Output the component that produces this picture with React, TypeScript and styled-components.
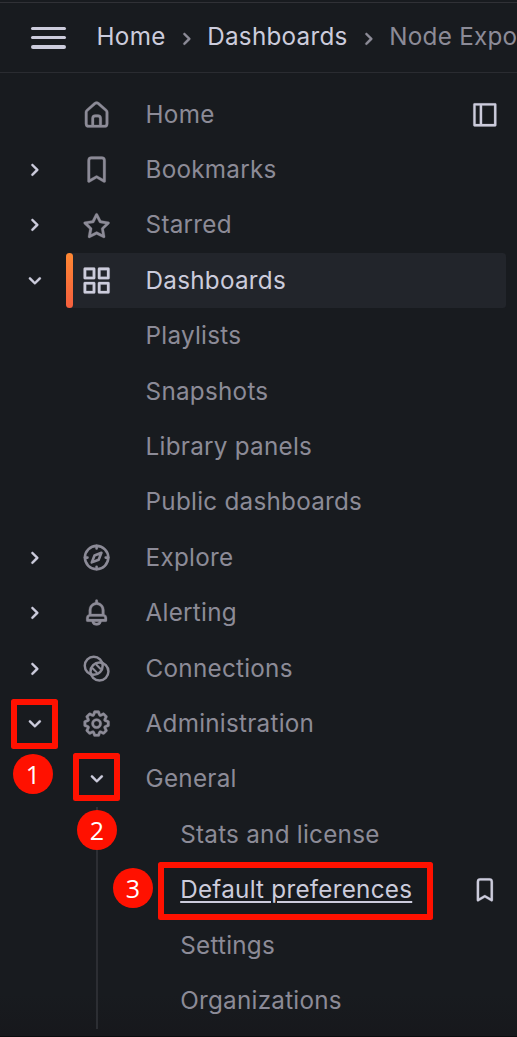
import React from 'react';
import styled, { createGlobalStyle, css } from 'styled-components';

const GlobalStyle = createGlobalStyle`
  * { box-sizing: border-box; }
  body {
    margin: 0;
    background: #181b1f;
    overflow: hidden;
  }
`;

const colors = {
  text: '#ccccdc',
  muted: '#8c8b97',
  line: '#2a2c31',
  mark: '#ff1100',
};

const Page = styled.div`
  position: relative;
  width: 517px;
  height: 1037px;
  overflow: hidden;
  display: flex;
  flex-direction: column;
  background: linear-gradient(#181b1f 96%, #17181c 100%);
  border-bottom: 1px solid #0b0c0e;
  font-family: Inter, 'Liberation Sans', sans-serif;
  font-size: 24.26px;
  letter-spacing: 0.25px;
  color: ${colors.muted};
`;

const TopBar = styled.header`
  flex: none;
  margin-top: 2px;
  height: 71px;
  border-top: 1px solid #303136;
  border-bottom: 1px solid ${colors.line};
  display: flex;
  align-items: center;
  padding: 0 0 3px 31px;
  white-space: nowrap;
`;

const MenuButton = styled.button`
  flex: none;
  width: 35px;
  height: 22px;
  margin: 3px 30.6px 0 0;
  padding: 0;
  border: 0;
  background: none;
  display: flex;
  flex-direction: column;
  justify-content: space-between;
`;

const MenuBar = styled.span`
  height: 3.6px;
  border-radius: 2px;
  background: ${colors.text};
`;

const Crumb = styled.span<{ $current?: boolean }>`
  color: ${(p) => (p.$current ? colors.muted : colors.text)};
`;

const CrumbSeparator = styled.span`
  flex: none;
  width: 41.7px;
  height: 28px;
  display: flex;
  align-items: center;
  justify-content: center;
  padding-top: 6px;
`;

const Nav = styled.nav`
  padding-top: 13.7px;
  display: flex;
  flex-direction: column;
`;

const Row = styled.div`
  height: 55.42px;
  display: flex;
  align-items: center;
  padding-right: 11px;
`;

const Toggle = styled.div`
  flex: none;
  width: 66px;
  display: flex;
  justify-content: center;
  padding: 0 0 0 3px;
  color: ${colors.text};
`;

const Item = styled.div<{ $active?: boolean }>`
  flex: 1;
  height: 100%;
  display: flex;
  align-items: center;
  border-radius: 3.5px;
  ${(p) =>
    p.$active &&
    css`
      background: #22252b;
      color: ${colors.text};
    `}
`;

const ActiveBar = styled.span`
  width: 7px;
  height: 100%;
  margin: 0 -6.5px 0 -0.5px;
  border-radius: 3.5px;
  background: linear-gradient(#ff8833, #f55f3e);
`;

const IconSlot = styled.span<{ $strong?: boolean }>`
  flex: none;
  width: 79.6px;
  padding-left: 15.4px;
  display: flex;
  ${(p) => p.$strong && css`
    padding-left: 17.1px;
    color: ${colors.text};
  `}
`;

const Label = styled.span<{ $indent?: boolean; $link?: boolean }>`
  flex: 1;
  line-height: 36px;
  padding: 0 0 1.6px ${(p) => (p.$indent ? '34.6px' : '0')};
  white-space: nowrap;
`;

const LinkText = styled.a`
  color: ${colors.text};
  text-decoration: underline;
  text-decoration-thickness: 2px;
  text-underline-offset: 3px;
`;

const Action = styled.span`
  width: 43px;
  display: flex;
  justify-content: center;
  color: ${colors.text};
`;

const SubTree = styled.div`
  position: relative;
  &::before {
    content: '';
    position: absolute;
    left: 96px;
    top: 0;
    bottom: 0;
    width: 2px;
    background: #2c2e33;
  }
`;

const Outline = styled.div<{ $x: number; $y: number; $w: number; $h: number }>`
  position: absolute;
  left: ${(p) => p.$x}px;
  top: ${(p) => p.$y}px;
  width: ${(p) => p.$w}px;
  height: ${(p) => p.$h}px;
  border: 6px solid ${colors.mark};
  border-radius: 2.5px;
`;

const Badge = styled.div<{ $x: number; $y: number }>`
  position: absolute;
  left: ${(p) => p.$x}px;
  top: ${(p) => p.$y}px;
  width: 40px;
  height: 40px;
  border-radius: 50%;
  background: ${colors.mark};
  color: #fff;
  font: 25px/41px 'Open Sans', sans-serif;
  letter-spacing: 0;
  text-align: center;
`;

const icons = {
  right: (
    <path d="M14.83,11.29,10.59,7.05a1,1,0,0,0-1.42,0,1,1,0,0,0,0,1.41L12.71,12,9.17,15.54a1,1,0,0,0,0,1.41,1,1,0,0,0,.71.29,1,1,0,0,0,.71-.29l4.24-4.24A1,1,0,0,0,14.83,11.29Z" />
  ),
  down: (
    <path d="M17,9.17a1,1,0,0,0-1.41,0L12,12.71,8.46,9.17a1,1,0,0,0-1.41,0,1,1,0,0,0,0,1.42l4.24,4.24a1,1,0,0,0,1.42,0L17,10.59A1,1,0,0,0,17,9.17Z" />
  ),
  home: (
    <path d="M20,8h0L14,2.74a3,3,0,0,0-4,0L4,8a3,3,0,0,0-1,2.26V19a3,3,0,0,0,3,3H18a3,3,0,0,0,3-3V10.25A3,3,0,0,0,20,8ZM14,20H10V15a1,1,0,0,1,1-1h2a1,1,0,0,1,1,1Zm5-1a1,1,0,0,1-1,1H16V15a3,3,0,0,0-3-3H11a3,3,0,0,0-3,3v5H6a1,1,0,0,1-1-1V10.25a1,1,0,0,1,.34-.75l6-5.25a1,1,0,0,1,1.32,0l6,5.25a1,1,0,0,1,.34.75Z" />
  ),
  bookmark: (
    <path d="M16,2H8A3,3,0,0,0,5,5V21a1,1,0,0,0,.5.87,1,1,0,0,0,1,0L12,18.69l5.5,3.18A1,1,0,0,0,18,22a1,1,0,0,0,.5-.13A1,1,0,0,0,19,21V5A3,3,0,0,0,16,2Zm1,17.27-4.5-2.6a1,1,0,0,0-1,0L7,19.27V5A1,1,0,0,1,8,4h8a1,1,0,0,1,1,1Z" />
  ),
  star: (
    <path d="M22,9.67A1,1,0,0,0,21.14,9l-5.69-.83L12.9,3a1,1,0,0,0-1.8,0L8.55,8.16,2.86,9a1,1,0,0,0-.81.68,1,1,0,0,0,.25,1l4.13,4-1,5.68A1,1,0,0,0,6.9,21.44L12,18.77l5.1,2.67a.93.93,0,0,0,.46.12,1,1,0,0,0,.59-.19,1,1,0,0,0,.4-1l-1-5.68,4.13-4A1,1,0,0,0,22,9.67Zm-6.15,4a1,1,0,0,0-.29.88l.72,4.2-3.76-2a1.06,1.06,0,0,0-.94,0l-3.76,2,.72-4.2a1,1,0,0,0-.29-.88l-3-3,4.21-.61a1,1,0,0,0,.76-.55L12,5.7l1.88,3.82a1,1,0,0,0,.76.55l4.21.61Z" />
  ),
  apps: (
    <path d="M10,13H3a1,1,0,0,0-1,1v7a1,1,0,0,0,1,1h7a1,1,0,0,0,1-1V14A1,1,0,0,0,10,13ZM9,20H4V15H9ZM21,2H14a1,1,0,0,0-1,1v7a1,1,0,0,0,1,1h7a1,1,0,0,0,1-1V3A1,1,0,0,0,21,2ZM20,9H15V4h5Zm1,4H14a1,1,0,0,0-1,1v7a1,1,0,0,0,1,1h7a1,1,0,0,0,1-1V14A1,1,0,0,0,21,13Zm-1,7H15V15h5ZM10,2H3A1,1,0,0,0,2,3v7a1,1,0,0,0,1,1h7a1,1,0,0,0,1-1V3A1,1,0,0,0,10,2ZM9,9H4V4H9Z" />
  ),
  compass: (
    <g fill="none" stroke="currentColor" strokeWidth="2" strokeLinecap="round" strokeLinejoin="round">
      <circle cx="12" cy="12" r="9" />
      <path d="M12 3v2M12 19v2M3 12h2M19 12h2" />
      <path d="M15.7 8.3l-2.1 5.3-5.3 2.1 2.1-5.3z" />
    </g>
  ),
  bell: (
    <path d="M18,13.18V10a6,6,0,0,0-5-5.91V3a1,1,0,0,0-2,0V4.09A6,6,0,0,0,6,10v3.18A3,3,0,0,0,4,16v2a1,1,0,0,0,1,1H8.14a4,4,0,0,0,7.72,0H19a1,1,0,0,0,1-1V16A3,3,0,0,0,18,13.18ZM8,10a4,4,0,0,1,8,0v3H8Zm4,10a2,2,0,0,1-1.72-1h3.44A2,2,0,0,1,12,20Zm6-3H6V16a1,1,0,0,1,1-1H17a1,1,0,0,1,1,1Z" />
  ),
  connections: (
    <g fill="none" stroke="currentColor" strokeWidth="1.9" strokeLinecap="round">
      <circle cx="9.8" cy="9.8" r="6.9" />
      <circle cx="14.2" cy="14.2" r="6.9" />
      <path strokeWidth="1.6" d="M11.9 9.1l3 3M9.1 11.9l3 3" />
    </g>
  ),
  cog: (
    <path d="M21.32,9.55l-1.89-.63.89-1.78A1,1,0,0,0,20.13,6L18,3.87a1,1,0,0,0-1.15-.19l-1.78.89-.63-1.89A1,1,0,0,0,13.5,2h-3a1,1,0,0,0-.95.68L8.92,4.57,7.14,3.68A1,1,0,0,0,6,3.87L3.87,6a1,1,0,0,0-.19,1.15l.89,1.78-1.89.63A1,1,0,0,0,2,10.5v3a1,1,0,0,0,.68.95l1.89.63-.89,1.78A1,1,0,0,0,3.87,18L6,20.13a1,1,0,0,0,1.15.19l1.78-.89.63,1.89a1,1,0,0,0,.95.68h3a1,1,0,0,0,.95-.68l.63-1.89,1.78.89A1,1,0,0,0,18,20.13L20.13,18a1,1,0,0,0,.19-1.15l-.89-1.78,1.89-.63A1,1,0,0,0,22,13.5v-3A1,1,0,0,0,21.32,9.55ZM20,12.78l-1.2.4A2,2,0,0,0,17.64,16l.57,1.14-1.1,1.1L16,17.64a2,2,0,0,0-2.79,1.16l-.4,1.2H11.22l-.4-1.2A2,2,0,0,0,8,17.64l-1.14.57-1.1-1.1L6.36,16A2,2,0,0,0,5.2,13.18L4,12.78V11.22l1.2-.4A2,2,0,0,0,6.36,8L5.79,6.89l1.1-1.1L8,6.36A2,2,0,0,0,10.82,5.2l.4-1.2h1.56l.4,1.2A2,2,0,0,0,16,6.36l1.14-.57,1.1,1.1L17.64,8a2,2,0,0,0,1.16,2.79l1.2.4ZM12,8a4,4,0,1,0,4,4A4,4,0,0,0,12,8Zm0,6a2,2,0,1,1,2-2A2,2,0,0,1,12,14Z" />
  ),
  dock: (
    <path
      fillRule="evenodd"
      d="M3 2H21a1 1 0 0 1 1 1V21a1 1 0 0 1-1 1H3a1 1 0 0 1-1-1V3a1 1 0 0 1 1-1ZM4 4V20H7.6V4ZM9.6 4V20H20V4Z"
    />
  ),
};

type IconName = keyof typeof icons;

const Glyph = styled.svg<{ $size: number }>`
  flex: none;
  width: ${(p) => p.$size}px;
  height: ${(p) => p.$size}px;
  fill: currentColor;
  stroke: currentColor;
  stroke-width: 0.2;
`;

const Icon = ({ name, size }: { name: IconName; size: number }) => (
  <Glyph $size={size} viewBox="0 0 24 24" aria-hidden="true">
    {icons[name]}
  </Glyph>
);

interface NavRowProps {
  label: string;
  toggle?: 'right' | 'down';
  icon?: IconName;
  branch?: boolean;
  active?: boolean;
  indent?: boolean;
  link?: boolean;
  action?: IconName;
}

const NavRow = ({ label, toggle, icon, branch, active, indent, link, action }: NavRowProps) => (
  <Row>
    <Toggle>{toggle && <Icon name={toggle} size={27.7} />}</Toggle>
    <Item $active={active}>
      {active && <ActiveBar />}
      <IconSlot $strong={branch}>
        {icon && <Icon name={icon} size={31.2} />}
        {branch && <Icon name="down" size={27.7} />}
      </IconSlot>
      <Label $indent={indent}>{link ? <LinkText>{label}</LinkText> : label}</Label>
      {action && (
        <Action>
          <Icon name={action} size={27.7} />
        </Action>
      )}
    </Item>
  </Row>
);

export default function App() {
  return (
    <>
      <GlobalStyle />
      <Page>
        <TopBar>
          <MenuButton aria-label="Toggle menu">
            <MenuBar />
            <MenuBar />
            <MenuBar />
          </MenuButton>
          <Crumb>Home</Crumb>
          <CrumbSeparator><Icon name="right" size={27.7} /></CrumbSeparator>
          <Crumb>Dashboards</Crumb>
          <CrumbSeparator><Icon name="right" size={27.7} /></CrumbSeparator>
          <Crumb $current>Node Expo</Crumb>
        </TopBar>
        <Nav>
          <NavRow label="Home" icon="home" action="dock" />
          <NavRow label="Bookmarks" toggle="right" icon="bookmark" />
          <NavRow label="Starred" toggle="right" icon="star" />
          <NavRow label="Dashboards" toggle="down" icon="apps" active />
          <NavRow label="Playlists" />
          <NavRow label="Snapshots" />
          <NavRow label="Library panels" />
          <NavRow label="Public dashboards" />
          <NavRow label="Explore" toggle="right" icon="compass" />
          <NavRow label="Alerting" toggle="right" icon="bell" />
          <NavRow label="Connections" toggle="right" icon="connections" />
          <NavRow label="Administration" toggle="down" icon="cog" />
          <NavRow label="General" branch />
          <SubTree>
            <NavRow label="Stats and license" indent />
            <NavRow label="Default preferences" indent link action="bookmark" />
            <NavRow label="Settings" indent />
            <NavRow label="Organizations" indent />
          </SubTree>
        </Nav>
        <Outline $x={11} $y={699} $w={47} $h={50} />
        <Badge $x={13} $y={754}>1</Badge>
        <Outline $x={73} $y={753} $w={47} $h={48} />
        <Badge $x={77} $y={810}>2</Badge>
        <Outline $x={158} $y={862} $w={275} $h={58} />
        <Badge $x={113} $y={868}>3</Badge>
      </Page>
    </>
  );
}
